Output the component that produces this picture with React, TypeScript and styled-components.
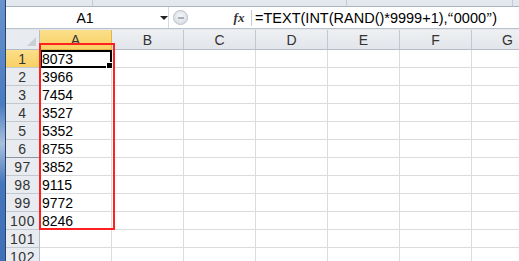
import styled, { createGlobalStyle } from "styled-components";

const GlobalStyle = createGlobalStyle`
  html, body {
    margin: 0;
    padding: 0;
    background: #ffffff;
    overflow: hidden;
  }
`;

const Window = styled.div`
  display: flex;
  width: 519px;
  height: 261px;
  overflow: hidden;
  background: #ffffff;
  font-family: "Liberation Sans", "Noto Sans CJK JP", sans-serif;
`;

const Frame = styled.div`
  width: 5px;
  flex-shrink: 0;
  background: linear-gradient(to bottom, #6a93cc, #4a7bc0 40%, #a9bfdc 55%, #4677bd 70%, #3f70b7);
  border-right: 1px solid #26456f;
`;

const Main = styled.div`
  flex: 1;
  display: flex;
  flex-direction: column;
  min-width: 0;

  & > * {
    flex-shrink: 0;
  }
`;

const Ribbon = styled.div`
  height: 6px;
  display: flex;
  background: #e3e8ee;
  border-bottom: 1px solid #aab4c2;
`;

const RibbonGroup = styled.div<{ $w: number }>`
  width: ${(p) => p.$w}px;
  flex-shrink: 0;
  border-right: 1px solid #c3cad4;
`;

const FormulaBar = styled.div`
  height: 21px;
  display: flex;
  align-items: stretch;
  background: #ffffff;
  border-bottom: 1px solid #b9c3cf;
`;

const NameBox = styled.div`
  width: 162px;
  display: flex;
  align-items: center;
  font-size: 14px;
  color: #000;
  border-right: 1px solid #d6dbe2;
`;

const NameText = styled.span`
  flex: 1;
  text-align: center;
  padding-left: 4px;
`;

const DropArrow = styled.span`
  width: 0;
  height: 0;
  border-left: 4px solid transparent;
  border-right: 4px solid transparent;
  border-top: 4px solid #222;
  margin-right: 0;
`;

const Splitter = styled.div`
  width: 83px;
  display: flex;
  align-items: center;
  background: #ffffff;
`;

const Knob = styled.div`
  width: 13px;
  height: 13px;
  margin-left: 4px;
  border-radius: 50%;
  background: radial-gradient(circle at 50% 40%, #f4f6f8, #d3d8de);
  border: 1px solid #b8bfc8;
  display: flex;
  align-items: center;
  justify-content: center;

  &::after {
    content: "";
    width: 6px;
    height: 2px;
    background: #a5adb7;
  }
`;

const FxButton = styled.div`
  margin-left: auto;
  width: 18px;
  display: flex;
  align-items: center;
  justify-content: center;
  font-family: "Liberation Serif", serif;
  font-style: italic;
  font-weight: bold;
  font-size: 13px;
  color: #333;
  border-right: 1px solid #c4cbd4;
  padding-right: 3px;
`;

const FormulaText = styled.div`
  flex: 1;
  display: flex;
  align-items: center;
  padding-left: 3px;
  font-size: 14.5px;
  white-space: nowrap;
  color: #000;
`;

const Wide = styled.span`
  font-family: "Noto Sans CJK JP", sans-serif;
  font-size: 13px;
`;

const Gap = styled.div`
  height: 1px;
  background: #e3e7ec;
`;

const SheetWrap = styled.div`
  position: relative;
`;

const Sheet = styled.div`
  display: grid;
  grid-template-columns: 34px repeat(7, 72px);
  grid-template-rows: 20px repeat(12, 18px);
`;

const Corner = styled.div`
  background: #e8ebef;
  border-right: 1px solid #b6bcc5;
  border-bottom: 1px solid #b6bcc5;
  position: relative;

  &::after {
    content: "";
    position: absolute;
    right: 3px;
    bottom: 3px;
    width: 0;
    height: 0;
    border-left: 9px solid transparent;
    border-bottom: 9px solid #c9ced5;
  }
`;

const ColHead = styled.div<{ $active?: boolean }>`
  display: flex;
  align-items: center;
  justify-content: center;
  font-size: 14px;
  color: #333;
  background: ${(p) =>
    p.$active
      ? "linear-gradient(to bottom, #fbdf8a, #f8d064)"
      : "linear-gradient(to bottom, #eef0f3, #e2e5ea)"};
  border-right: 1px solid ${(p) => (p.$active ? "#e2b54a" : "#c3c8cf")};
  border-bottom: 1px solid ${(p) => (p.$active ? "#e2b54a" : "#b6bcc5")};
`;

const RowHead = styled.div<{ $active?: boolean; $hidden?: boolean }>`
  display: flex;
  align-items: center;
  justify-content: center;
  font-size: 14px;
  color: #333;
  letter-spacing: 0.5px;
  background: ${(p) =>
    p.$active ? "linear-gradient(to bottom, #fbdf8a, #f8d064)" : "#e8ebef"};
  border-right: 1px solid #b6bcc5;
  border-bottom: 1px solid ${(p) => (p.$hidden ? "#8e959e" : "#c3c8cf")};
`;

const Cell = styled.div`
  display: flex;
  align-items: center;
  padding-left: 2px;
  font-size: 14px;
  color: #000;
  background: #ffffff;
  border-right: 1px solid #dadcdd;
  border-bottom: 1px solid #dadcdd;
`;

const ActiveCell = styled.div`
  position: absolute;
  left: 34px;
  top: 20px;
  width: 72px;
  height: 18px;
  box-sizing: border-box;
  border: 2px solid #000;
  pointer-events: none;

  &::after {
    content: "";
    position: absolute;
    right: -3px;
    bottom: -3px;
    width: 5px;
    height: 5px;
    background: #000;
    border: 1px solid #fff;
  }
`;

const Highlight = styled.div`
  position: absolute;
  left: 33px;
  top: 13px;
  width: 76px;
  height: 187px;
  box-sizing: border-box;
  border: 2px solid #ff2020;
  pointer-events: none;
`;

const columns = ["A", "B", "C", "D", "E", "F", "G"];

const rows: { n: number; v?: string; hidden?: boolean }[] = [
  { n: 1, v: "8073" },
  { n: 2, v: "3966" },
  { n: 3, v: "7454" },
  { n: 4, v: "3527" },
  { n: 5, v: "5352" },
  { n: 6, v: "8755", hidden: true },
  { n: 97, v: "3852" },
  { n: 98, v: "9115" },
  { n: 99, v: "9772" },
  { n: 100, v: "8246" },
  { n: 101 },
  { n: 102 },
];

export default function App() {
  return (
    <>
      <GlobalStyle />
      <Window>
        <Frame />
        <Main>
          <Ribbon>
            <RibbonGroup $w={86} />
            <RibbonGroup $w={253} />
            <RibbonGroup $w={165} />
          </Ribbon>
          <FormulaBar>
            <NameBox>
              <NameText>A1</NameText>
              <DropArrow />
            </NameBox>
            <Splitter>
              <Knob />
              <FxButton>fx</FxButton>
            </Splitter>
            <FormulaText>
              =TEXT(INT(RAND()*9999+1),<Wide>“</Wide>0000<Wide>”</Wide>)
            </FormulaText>
          </FormulaBar>
          <Gap />
          <SheetWrap>
            <Sheet>
              <Corner />
              {columns.map((c) => (
                <ColHead key={c} $active={c === "A"}>
                  {c}
                </ColHead>
              ))}
              {rows.map((r) => [
                <RowHead key={`h${r.n}`} $active={r.n === 1} $hidden={r.hidden}>
                  {r.n}
                </RowHead>,
                ...columns.map((c) => (
                  <Cell key={`${c}${r.n}`}>{c === "A" ? r.v : null}</Cell>
                )),
              ])}
            </Sheet>
            <ActiveCell />
            <Highlight />
          </SheetWrap>
        </Main>
      </Window>
    </>
  );
}
